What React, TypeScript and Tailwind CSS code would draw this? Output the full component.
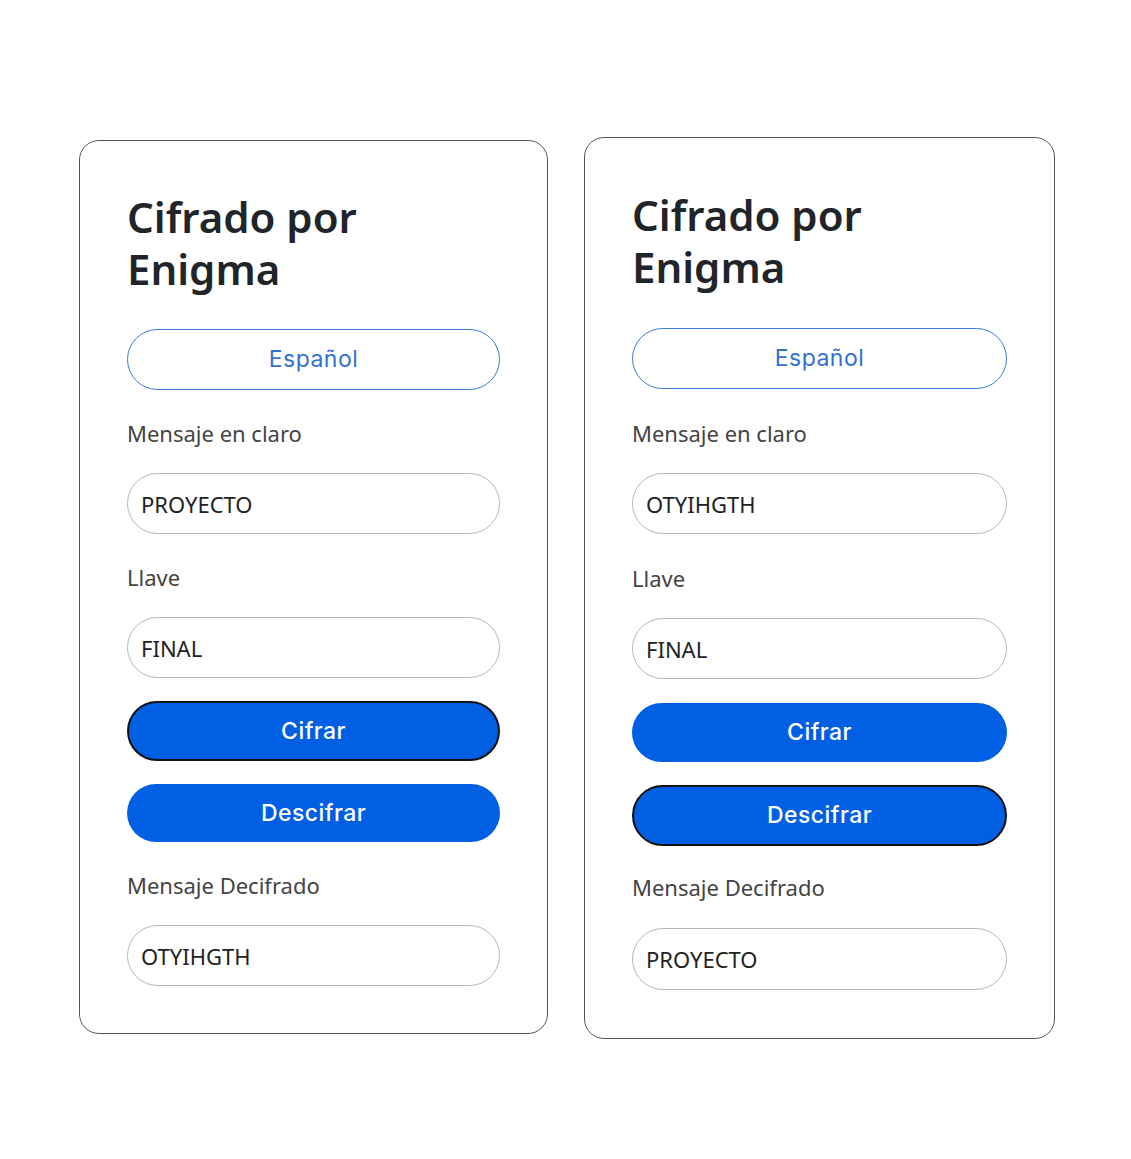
const SANS = "font-['Noto_Sans','Open_Sans',sans-serif]";
const BTN = "font-['Inter','Lato',sans-serif]";

type Focus = "cifrar" | "descifrar";

// spacing differs a hair between the two screenshots
const LEFT = {
  card: "w-[469px] mt-[3px] pt-[50px] pb-[47px]",
  lang: "mt-[34px]",
  label1: "mt-[28px] mb-[25px]",
  label2: "mt-[28px] mb-[25px]",
  label3: "mt-[28px] mb-[25px]",
  cifrar: "mt-[23px] h-[60px]",
  descifrar: "mt-[23px] h-[58px]",
  out: "h-[61px]",
};

const RIGHT = {
  card: "w-[471px] pt-[51px] pb-[48px]",
  lang: "mt-[35px]",
  label1: "mt-[29px] mb-[25px]",
  label2: "mt-[29px] mb-[25px]",
  label3: "mt-[26px] mb-[26px]",
  cifrar: "mt-[24px] h-[59px]",
  descifrar: "mt-[23px] h-[61px]",
  out: "h-[62px]",
};

interface CardProps {
  plain: string;
  llave: string;
  result: string;
  focus: Focus;
  sp: typeof LEFT;
}

function Field({ value, size = "h-[61px]" }: { value: string; size?: string }) {
  return (
    <input
      readOnly
      value={value}
      className={`block w-full ${size} rounded-full border border-[#b8b8b8] bg-white px-[13px] text-[22px] text-[#222] outline-none ${SANS}`}
    />
  );
}

function Label({ children, sp }: { children: string; sp: string }) {
  return <p className={`${sp} leading-[30px] text-[22px] text-[#444] ${SANS}`}>{children}</p>;
}

function ActionButton({ label, focused, sp }: { label: string; focused: boolean; sp: string }) {
  return (
    <button
      className={
        `block w-full rounded-full bg-[#005fe3] text-white text-[23px] tracking-[0.02em] font-medium ${BTN} ${sp}` +
        (focused ? " border-2 border-[#111]" : "")
      }
    >
      {label}
    </button>
  );
}

function EnigmaCard({ plain, llave, result, focus, sp }: CardProps) {
  return (
    <div className={`bg-white border border-[#555] rounded-[20px] px-[47px] ${sp.card}`}>
      <h1 className={`text-[42px] leading-[52px] font-semibold text-[#212529] ${SANS}`}>
        Cifrado por
        <br />
        Enigma
      </h1>
      <button
        className={`block ${sp.lang} w-full h-[61px] rounded-full border-[1.5px] border-[#3a7ad8] text-[#3270d4] text-[23px] tracking-[0.02em] ${BTN}`}
      >
        Español
      </button>
      <Label sp={sp.label1}>Mensaje en claro</Label>
      <Field value={plain} />
      <Label sp={sp.label2}>Llave</Label>
      <Field value={llave} />
      <ActionButton label="Cifrar" focused={focus === "cifrar"} sp={sp.cifrar} />
      <ActionButton label="Descifrar" focused={focus === "descifrar"} sp={sp.descifrar} />
      <Label sp={sp.label3}>Mensaje Decifrado</Label>
      <Field value={result} size={sp.out} />
    </div>
  );
}

export default function App() {
  return (
    <div className="min-h-[1159px] w-[1131px] bg-white flex items-start gap-[36px] pl-[79px] pt-[137px]">
      <EnigmaCard plain="PROYECTO" llave="FINAL" result="OTYIHGTH" focus="cifrar" sp={LEFT} />
      <EnigmaCard plain="OTYIHGTH" llave="FINAL" result="PROYECTO" focus="descifrar" sp={RIGHT} />
    </div>
  );
}
